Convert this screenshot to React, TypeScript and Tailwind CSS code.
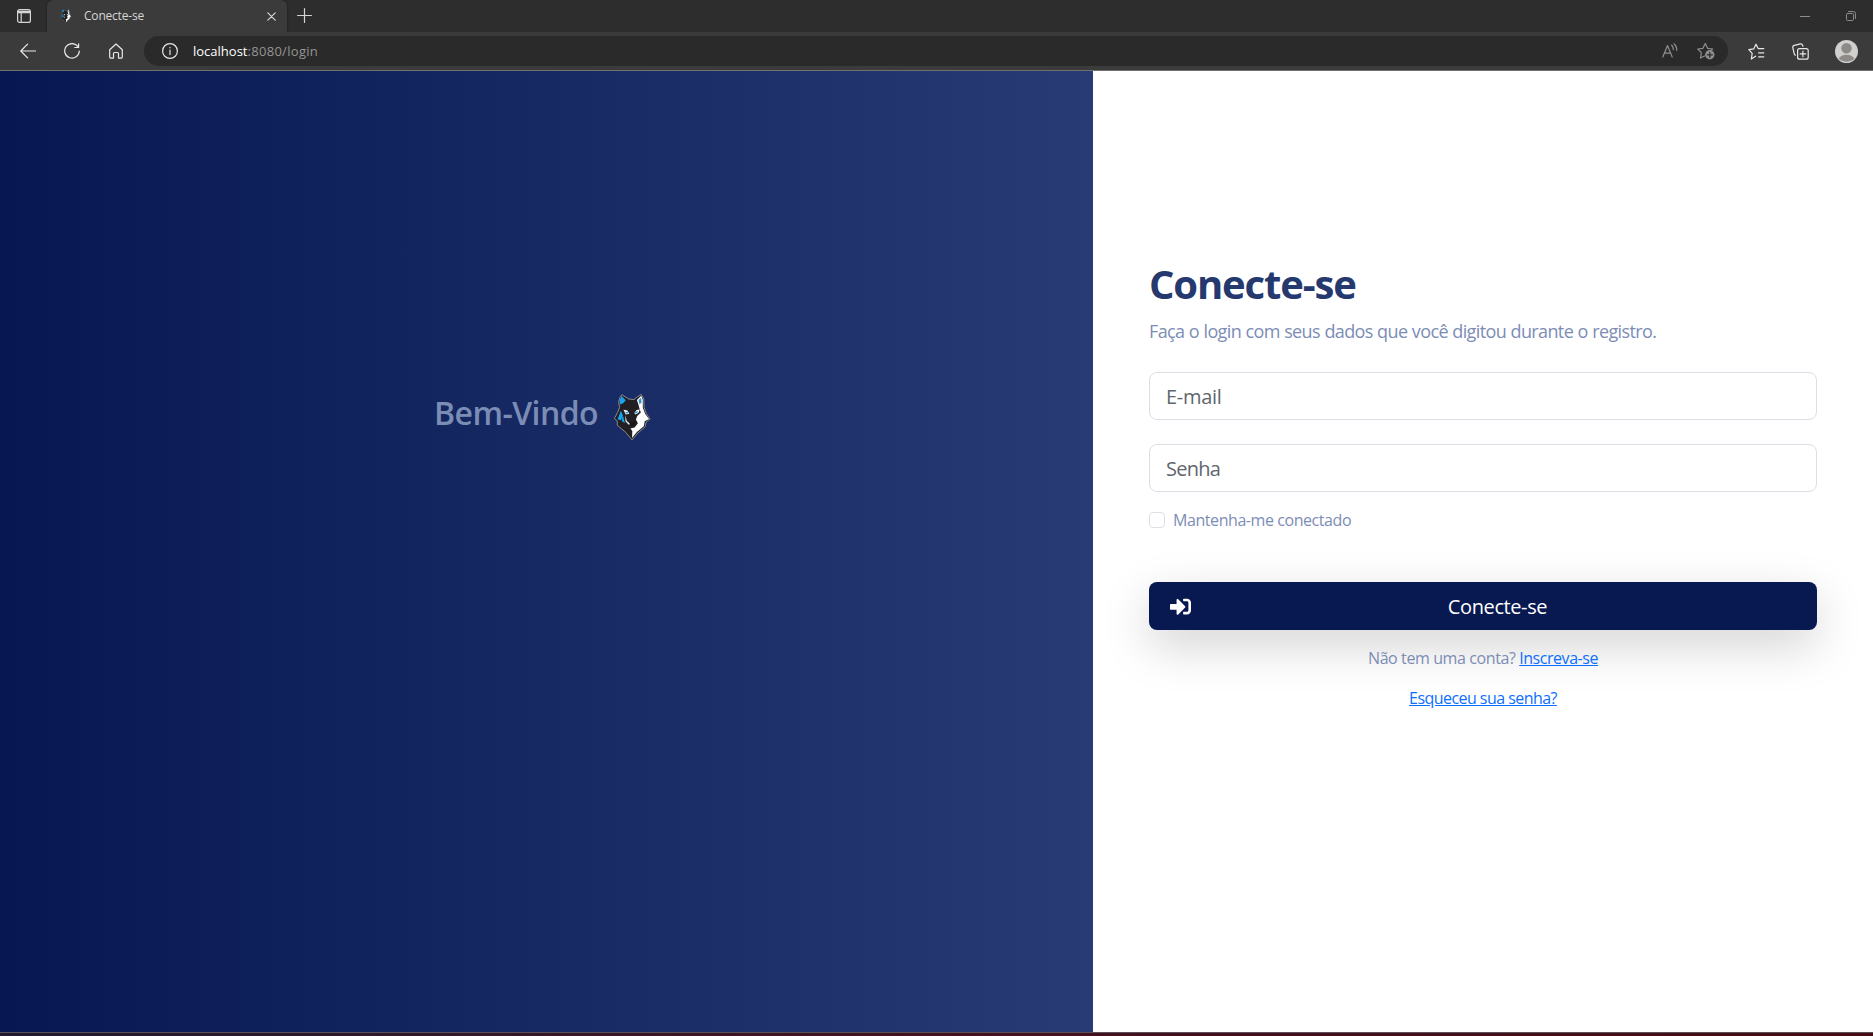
import type { ReactNode } from 'react';
import { FaSignInAlt } from 'react-icons/fa';

function Icon({ w, h, className = '', children }: { w: number; h: number; className?: string; children: ReactNode }) {
  return (
    <svg
      width={w}
      height={h}
      viewBox={`0 0 ${w} ${h}`}
      fill="none"
      stroke="currentColor"
      strokeWidth="1.2"
      strokeLinecap="round"
      strokeLinejoin="round"
      className={`shrink-0 ${className}`}
    >
      {children}
    </svg>
  );
}

function Wolf({ className }: { className: string }) {
  return (
    <svg viewBox="578 36 116 146" className={`shrink-0 ${className}`}>
      <path
        d="M605 41 L599 50 L595 64 L598 80 L592 95 L582 114 L591 121 L591 134 L605 146 L617 156 L636 179 L654 158 L676 139 L679 125 L691 115 L679 97 L673 80 L672 54 L664 40 L650 49 L642 56 L626 54 Z"
        fill="#211f24"
        stroke="#8b8b90"
        strokeWidth="3"
        strokeLinejoin="round"
      />
      <path d="M604 45 L598 58 L599 71 L609 67 L617 58 Z" fill="#1ba2ea" />
      <path d="M602 90 L592 116 L602 119 L609 106 Z M608 102 L614 128 L605 121 Z" fill="#16a5f0" />
      <path
        d="M664 44 L651 57 L656 72 L659 84 L663 95 L652 106 L648 117 L654 128 L644 141 L631 144 L637 152 L636 173 L651 155 L672 137 L675 122 L688 115 L676 99 L669 80 L669 56 Z"
        fill="#fff"
      />
      <path d="M656 57 L664 50 L665 64 L659 71 Z" fill="#2690d0" />
      <path d="M610 87 L622 89 L628 99 L617 101 Z M643 97 L650 88 L660 86 L656 96 L647 101 Z" fill="#fff" />
      <path d="M615 93 L624 93 L625 98 L618 98 Z M645 93 L654 91 L652 97 L646 98 Z" fill="#2c94d6" />
      <path d="M616 104 L620 121 L631 130 L626 133 L616 122 Z" fill="#f4f4f4" />
      <path d="M629 124 L648 122 L645 132 L637 137 L629 132 Z" fill="#18161b" />
    </svg>
  );
}

function TitleBar() {
  return (
    <div className="flex h-8 bg-[#2d2d2d] text-[#d6d6d6]">
      <div className="flex w-[47px] items-start pt-[9px] pl-[17px]">
        <Icon w={14} h={14}>
          <rect x="0.6" y="0.6" width="12.8" height="12.8" rx="2" />
          <path d="M1 2.3H13M1 3.6H13M4.2 4V13" />
        </Icon>
      </div>
      <div className="flex h-8 w-[240px] items-center rounded-t-[6px] bg-[#3b3b3b] shadow-[0_0_2px_#151515]">
        <Wolf className="ml-[13px] h-[14px] w-[12px]" />
        <span className="ml-3 w-[179px] text-xs leading-4 tracking-[-0.2px]">Conecte-se</span>
        <Icon w={9} h={9} className="ml-1">
          <path d="M0.8 0.8L8.2 8.2M8.2 0.8L0.8 8.2" />
        </Icon>
      </div>
      <Icon w={15} h={15} className="mt-2 ml-[10px]">
        <path d="M7.5 0.6V14.4M0.6 7.5H14.4" />
      </Icon>
      <div className="ml-auto flex items-center pr-[17px] text-[#8c8c8c]">
        <Icon w={10} h={10} className="mr-[36px]">
          <path d="M0 5.5H10" strokeWidth="1" />
        </Icon>
        <Icon w={10} h={10}>
          <rect x="0.5" y="2.5" width="7" height="7" rx="1" strokeWidth="1" />
          <path d="M2.5 0.5H7.5A2 2 0 0 1 9.5 2.5V7.5" strokeWidth="1" />
        </Icon>
      </div>
    </div>
  );
}

function Toolbar() {
  return (
    <div className="flex h-[39px] items-center border-b border-[#707070] bg-[#3b3b3b] text-[#e8e8e8]">
      <Icon w={16} h={16} className="ml-5">
        <path d="M15.6 8H0.8M7.6 1.2L0.8 8L7.6 14.8" />
      </Icon>
      <Icon w={16} h={16} className="ml-7">
        <path d="M14 3.7A7.3 7.3 0 1 0 15.3 8M14.6 0.8V4.5H10.8" />
      </Icon>
      <Icon w={14} h={16} className="ml-[29px]">
        <path d="M0.7 6.8L7 1L13.3 6.8V14.1A1 1 0 0 1 12.3 15.1H9.5V10.5A1 1 0 0 0 8.5 9.5H5.5A1 1 0 0 0 4.5 10.5V15.1H1.7A1 1 0 0 1 0.7 14.1Z" />
      </Icon>
      <div className="ml-[21px] flex h-[30px] w-[1584px] items-center rounded-full bg-[#2a2a2a]">
        <Icon w={16} h={16} className="ml-[18px]">
          <circle cx="8" cy="8" r="7.4" />
          <path d="M8 7V11.6M8 4.4V4.8" />
        </Icon>
        <span className="ml-[15px] text-[13px] leading-5 text-white">localhost</span>
        <span className="text-[13px] leading-5 tracking-[0.3px] text-[#949494]">:8080/login</span>
        <Icon w={16} h={16} className="ml-auto text-[#8e8e8e]">
          <path d="M0.8 14L5.5 2.6L10.2 14M2.5 10.2H8.6M9.6 2.2Q11.6 4 11.2 6.6M12 0.8Q15.4 3.6 14.6 7.4" />
        </Icon>
        <Icon w={18} h={18} className="mr-[13px] ml-[19px] text-[#8e8e8e]">
          <path d="M7.5 14L3.5 16L4.4 10.7L0.8 7L5.9 6.3L8.3 1.5L10.6 6.3L15.6 7L14.6 8" />
          <circle cx="12.8" cy="12.8" r="4.7" fill="currentColor" stroke="none" />
          <path d="M12.8 10.3V15.3M10.3 12.8H15.3" stroke="#2a2a2a" />
        </Icon>
      </div>
      <Icon w={17} h={17} className="ml-5">
        <path d="M7.6 13.2L3.3 16L4.2 10.4L0.8 6.6L5.7 5.9L8 1.2L10.2 5.6H15.8M10.6 9.8H15.8M10.6 13.8H15.8" />
      </Icon>
      <Icon w={17} h={17} className="ml-[27px]">
        <path d="M3.4 12.2A2.5 2.5 0 0 1 2.2 10.6L0.8 4.6A2 2 0 0 1 2.3 2.3L8.4 0.8A2 2 0 0 1 10.6 2.3L10.9 3.2" />
        <rect x="5.6" y="5.6" width="10.6" height="10.6" rx="2" />
        <path d="M10.9 8.1V13.7M8.1 10.9H13.7" />
      </Icon>
      <svg width="23" height="23" viewBox="0 0 23 23" className="ml-[26px] shrink-0">
        <circle cx="11.5" cy="11.5" r="11.5" fill="#d2d0ce" />
        <circle cx="11.5" cy="8.3" r="5.2" fill="#8d8a87" />
        <path d="M3.6 18.6Q6 14.8 11.5 14.8T19.4 18.6A11.5 11.5 0 0 1 3.6 18.6Z" fill="#8d8a87" />
      </svg>
    </div>
  );
}

export default function App() {
  return (
    <div className="flex h-[1036px] w-[1873px] flex-col overflow-hidden bg-white font-['Open_Sans',sans-serif]">
      <TitleBar />
      <Toolbar />
      <main className="flex h-[961px]">
        <section className="flex w-[1093px] items-start bg-linear-to-r from-[#071751] to-[#283b75] pt-[322px] pl-[434px]">
          <h2 className="w-[179px] text-[32px] leading-[40px] font-semibold tracking-[-0.55px] text-[#7c8db5]">Bem-Vindo</h2>
          <Wolf className="h-[48px] w-[38px]" />
        </section>
        <section className="flex w-[780px] flex-col px-14 pt-[188px]">
          <h1 className="text-[40px] leading-[50px] font-bold tracking-[-1.15px] text-[#25396f]">Conecte-se</h1>
          <p className="mt-[9px] text-[18px] leading-[27px] tracking-[-0.62px] text-[#7c8db5] [word-spacing:0.35px]">
            Faça o login com seus dados que você digitou durante o registro.
          </p>
          <input
            type="text"
            placeholder="E-mail"
            className="mt-[27px] h-12 w-full rounded-lg border border-[#dce0e6] px-4 text-xl tracking-[-0.3px] placeholder:text-[#5f666d]"
          />
          <input
            type="password"
            placeholder="Senha"
            className="mt-6 h-12 w-full rounded-lg border border-[#dce0e6] px-4 text-xl tracking-[-0.75px] placeholder:text-[#5f666d]"
          />
          <label className="mt-4 flex h-6 items-center text-base leading-6 tracking-[-0.43px] text-[#7c8db5]">
            <input type="checkbox" className="mr-2 size-4 appearance-none rounded border border-[#dce0e6]" />
            Mantenha-me conectado
          </label>
          <button className="mt-[50px] flex h-12 w-full items-center rounded-lg bg-[#081850] pr-4 pl-[21px] text-xl tracking-[-0.4px] text-white shadow-[0_16px_48px_rgba(0,0,0,0.175)]">
            <FaSignInAlt size={21} />
            <span className="flex-1 pt-[2px] pl-[3px] text-center">Conecte-se</span>
          </button>
          <p className="mt-4 text-center text-base leading-[25px] tracking-[-0.4px] text-[#7c8db5]">
            Não tem uma conta?{' '}
            <a className="tracking-[-0.45px] text-[#0d6efd] underline">Inscreva-se</a>
          </p>
          <p className="mt-[15px] text-center text-base leading-[25px] tracking-[-0.55px]">
            <a className="text-[#0d6efd] underline">Esqueceu sua senha?</a>
          </p>
        </section>
      </main>
      <div className="h-1 border-t border-[#5a5058] bg-linear-to-r from-[#201a30] via-[#43111f] to-[#480d14]" />
    </div>
  );
}
